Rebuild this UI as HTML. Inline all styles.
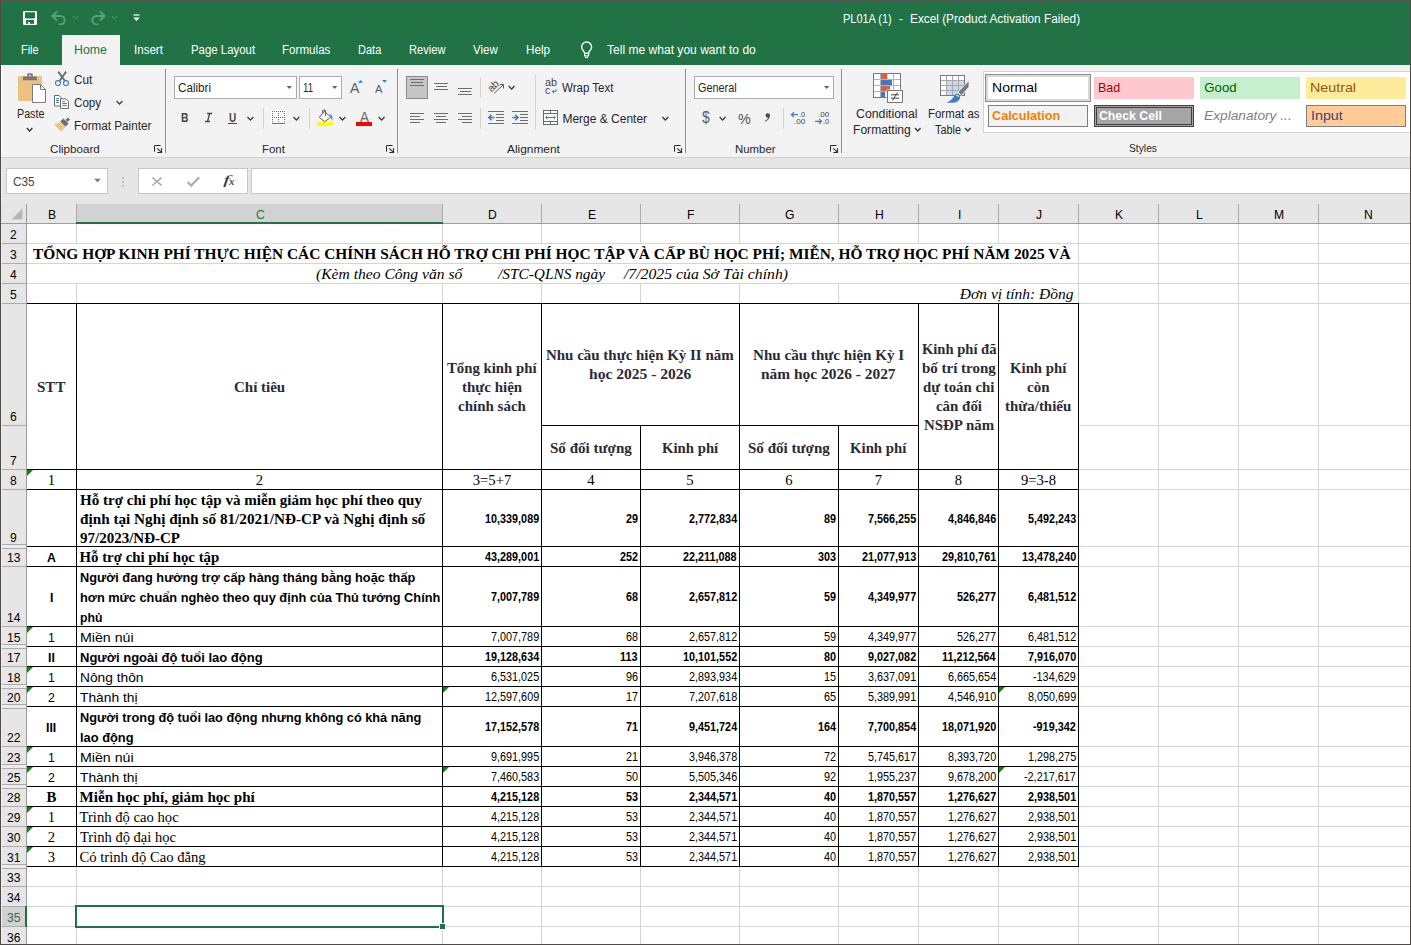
<!DOCTYPE html>
<html><head><meta charset="utf-8"><title>PL01A (1) - Excel</title>
<style>
html,body{margin:0;padding:0}
body{width:1411px;height:945px;overflow:hidden;position:relative;background:#fff;font-family:"Liberation Sans",sans-serif}
div,span,svg{position:absolute;display:block}
span{white-space:pre;transform-origin:0 0}
</style></head>
<body>
<div style="left:0px;top:0px;width:1411px;height:65px;background:#217346;"></div>
<div style="left:0px;top:65px;width:1411px;height:92px;background:#f3f3f3;"></div>
<div style="left:0px;top:157px;width:1411px;height:47px;background:#e6e6e6;"></div>
<div style="left:0px;top:157px;width:1411px;height:1px;background:#d2d2d2;"></div>
<div style="left:62px;top:35px;width:58px;height:30px;background:#f3f3f3;"></div>
<span style="left:842.50px;top:13px;font-size:12px;line-height:12px;color:#fff;transform:scaleX(0.9124);">PL01A (1)</span>
<span style="left:899.10px;top:13px;font-size:12px;line-height:12px;color:#fff;">-</span>
<span style="left:909.60px;top:13px;font-size:12px;line-height:12px;color:#fff;transform:scaleX(0.9847);">Excel (Product Activation Failed)</span>
<span style="left:21.30px;top:44px;font-size:12px;line-height:12px;color:#fff;transform:scaleX(0.9047);">File</span>
<span style="left:74.30px;top:44px;font-size:12px;line-height:12px;color:#217346;transform:scaleX(1.0276);">Home</span>
<span style="left:134.10px;top:44px;font-size:12px;line-height:12px;color:#fff;transform:scaleX(0.9628);">Insert</span>
<span style="left:190.50px;top:44px;font-size:12px;line-height:12px;color:#fff;transform:scaleX(0.9512);">Page Layout</span>
<span style="left:282.40px;top:44px;font-size:12px;line-height:12px;color:#fff;transform:scaleX(0.9677);">Formulas</span>
<span style="left:358.00px;top:44px;font-size:12px;line-height:12px;color:#fff;transform:scaleX(0.9188);">Data</span>
<span style="left:409.30px;top:44px;font-size:12px;line-height:12px;color:#fff;transform:scaleX(0.9274);">Review</span>
<span style="left:473.00px;top:44px;font-size:12px;line-height:12px;color:#fff;transform:scaleX(0.9575);">View</span>
<span style="left:525.50px;top:44px;font-size:12px;line-height:12px;color:#fff;transform:scaleX(0.9762);">Help</span>
<span style="left:606.90px;top:44px;font-size:12px;line-height:12px;color:#fff;transform:scaleX(1.0049);">Tell me what you want to do</span>
<svg style="left:23px;top:11px" width="14" height="14" viewBox="0 0 14 14"><rect x="0" y="0" width="14" height="14" rx="1" fill="#fff"/><path d="M2 1.2h10v5l-1 1.3h-8l-1-1.3z" fill="#217346"/><rect x="3" y="9" width="8" height="3.8" fill="#217346"/><rect x="5.1" y="11" width="1.8" height="1.8" fill="#fff"/></svg>
<svg style="left:51px;top:10px" width="16" height="15" viewBox="0 0 16 15"><path d="M6 1.5L1.5 6L6 10.5 M2 6H9.5a4.2 4.2 0 0 1 0 8.4H7.5" fill="none" stroke="#5f9f7c" stroke-width="1.9"/></svg>
<svg style="left:72px;top:15px" width="7" height="5" viewBox="0 0 7 5"><path d="M0.5 0.8L3.5 3.8L6.5 0.8" fill="none" stroke="#5f9f7c" stroke-width="1"/></svg>
<svg style="left:90px;top:10px" width="16" height="15" viewBox="0 0 16 15"><path d="M10 1.5L14.5 6L10 10.5 M14 6H6.5a4.2 4.2 0 0 0 0 8.4H8.5" fill="none" stroke="#5f9f7c" stroke-width="1.9"/></svg>
<svg style="left:111px;top:15px" width="7" height="5" viewBox="0 0 7 5"><path d="M0.5 0.8L3.5 3.8L6.5 0.8" fill="none" stroke="#5f9f7c" stroke-width="1"/></svg>
<svg style="left:133px;top:14px" width="7" height="8" viewBox="0 0 7 8"><path d="M0.5 1h6" stroke="#fff" stroke-width="1.2"/><path d="M0.3 3.5h6.4L3.5 7z" fill="#fff"/></svg>
<svg style="left:578px;top:40px" width="18" height="20" viewBox="0 0 18 20"><path d="M6.6 13.3c-0.2-2.6-3-3.3-3-6.3a5 5 0 0 1 10 0c0 3-2.8 3.7-3 6.3z" fill="none" stroke="#fff" stroke-width="1.35"/><rect x="6.6" y="13.3" width="4" height="2.6" fill="none" stroke="#fff" stroke-width="1.2"/><path d="M7.1 17.5h3" stroke="#fff" stroke-width="1.2"/></svg>
<div style="left:165px;top:69px;width:1px;height:84px;background:#8e8e8e;"></div>
<div style="left:397px;top:69px;width:1px;height:84px;background:#8e8e8e;"></div>
<div style="left:685px;top:69px;width:1px;height:84px;background:#8e8e8e;"></div>
<div style="left:841px;top:69px;width:1px;height:84px;background:#8e8e8e;"></div>
<span style="left:16.60px;top:108px;font-size:12px;line-height:12px;color:#262626;transform:scaleX(0.8929);">Paste</span>
<span style="left:73.50px;top:74px;font-size:12px;line-height:12px;color:#262626;transform:scaleX(0.9793);">Cut</span>
<span style="left:73.50px;top:97px;font-size:12px;line-height:12px;color:#262626;transform:scaleX(0.9673);">Copy</span>
<span style="left:73.50px;top:120px;font-size:12px;line-height:12px;color:#262626;transform:scaleX(0.9741);">Format Painter</span>
<span style="left:49.60px;top:144px;font-size:10.8px;line-height:10.8px;color:#262626;transform:scaleX(1.0775);">Clipboard</span>
<div style="left:174px;top:76px;width:123px;height:23px;background:#fff;box-sizing:border-box;border:1px solid #ababab;"></div>
<span style="left:177.80px;top:82px;font-size:12px;line-height:12px;color:#262626;transform:scaleX(0.9701);">Calibri</span>
<div style="left:299px;top:76px;width:43px;height:23px;background:#fff;box-sizing:border-box;border:1px solid #ababab;"></div>
<span style="left:302.90px;top:82px;font-size:12px;line-height:12px;color:#262626;transform:scaleX(0.8020);">11</span>
<span style="left:350.20px;top:81px;font-size:14px;line-height:14px;color:#5a5a5a;transform:scaleX(1.0060);">A</span>
<span style="left:375.30px;top:84px;font-size:11px;line-height:11px;color:#5a5a5a;transform:scaleX(1.0213);">A</span>
<span style="left:180.80px;top:112px;font-size:12.6px;line-height:12.6px;color:#444;font-weight:bold;transform:scaleX(0.8123);">B</span>
<span style="left:229.00px;top:112px;font-size:12.3px;line-height:12.3px;color:#444;font-weight:bold;transform:scaleX(0.8098);">U</span>
<div style="left:228px;top:123px;width:9px;height:1px;background:#444;"></div>
<div style="left:263px;top:108px;width:1px;height:21px;background:#d2d2d2;"></div>
<div style="left:271px;top:110px;width:15px;height:15px;background:#fff;"></div>
<div style="left:272px;top:123px;width:13px;height:1px;background:#6a6a6a;"></div>
<div style="left:309px;top:108px;width:1px;height:21px;background:#d2d2d2;"></div>
<div style="left:317px;top:122px;width:16px;height:4px;background:#ffff00;"></div>
<span style="left:359.70px;top:110px;font-size:14px;line-height:14px;color:#666;transform:scaleX(0.9632);">A</span>
<div style="left:356px;top:122px;width:16px;height:4px;background:#ff0000;"></div>
<span style="left:261.80px;top:144px;font-size:10.8px;line-height:10.8px;color:#262626;transform:scaleX(1.0597);">Font</span>
<div style="left:406px;top:76px;width:22px;height:23px;background:#c6c6c6;box-sizing:border-box;border:1px solid #8a8a8a;"></div>
<div style="left:410px;top:79px;width:14px;height:1px;background:#6e6e6e;"></div>
<div style="left:411px;top:82px;width:12px;height:1px;background:#6e6e6e;"></div>
<div style="left:410px;top:85px;width:14px;height:1px;background:#6e6e6e;"></div>
<div style="left:434px;top:83px;width:14px;height:1px;background:#6e6e6e;"></div>
<div style="left:436px;top:86px;width:11px;height:1px;background:#6e6e6e;"></div>
<div style="left:434px;top:89px;width:14px;height:1px;background:#6e6e6e;"></div>
<div style="left:458px;top:88px;width:14px;height:1px;background:#6e6e6e;"></div>
<div style="left:460px;top:91px;width:11px;height:1px;background:#6e6e6e;"></div>
<div style="left:458px;top:94px;width:14px;height:1px;background:#6e6e6e;"></div>
<div style="left:480px;top:77px;width:1px;height:21px;background:#d2d2d2;"></div>
<div style="left:535px;top:75px;width:1px;height:55px;background:#d2d2d2;"></div>
<div style="left:410px;top:113px;width:14px;height:1px;background:#6e6e6e;"></div>
<div style="left:410px;top:116px;width:10px;height:1px;background:#6e6e6e;"></div>
<div style="left:410px;top:119px;width:14px;height:1px;background:#6e6e6e;"></div>
<div style="left:410px;top:122px;width:10px;height:1px;background:#6e6e6e;"></div>
<div style="left:434px;top:113px;width:14px;height:1px;background:#6e6e6e;"></div>
<div style="left:436px;top:116px;width:10px;height:1px;background:#6e6e6e;"></div>
<div style="left:434px;top:119px;width:14px;height:1px;background:#6e6e6e;"></div>
<div style="left:436px;top:122px;width:10px;height:1px;background:#6e6e6e;"></div>
<div style="left:458px;top:113px;width:14px;height:1px;background:#6e6e6e;"></div>
<div style="left:462px;top:116px;width:10px;height:1px;background:#6e6e6e;"></div>
<div style="left:458px;top:119px;width:14px;height:1px;background:#6e6e6e;"></div>
<div style="left:462px;top:122px;width:10px;height:1px;background:#6e6e6e;"></div>
<div style="left:480px;top:108px;width:1px;height:21px;background:#d2d2d2;"></div>
<div style="left:488px;top:111px;width:16px;height:1px;background:#6e6e6e;"></div>
<div style="left:496px;top:114px;width:8px;height:1px;background:#6e6e6e;"></div>
<div style="left:496px;top:117px;width:8px;height:1px;background:#6e6e6e;"></div>
<div style="left:496px;top:120px;width:8px;height:1px;background:#6e6e6e;"></div>
<div style="left:488px;top:123px;width:16px;height:1px;background:#6e6e6e;"></div>
<div style="left:512px;top:111px;width:16px;height:1px;background:#6e6e6e;"></div>
<div style="left:520px;top:114px;width:8px;height:1px;background:#6e6e6e;"></div>
<div style="left:520px;top:117px;width:8px;height:1px;background:#6e6e6e;"></div>
<div style="left:520px;top:120px;width:8px;height:1px;background:#6e6e6e;"></div>
<div style="left:512px;top:123px;width:16px;height:1px;background:#6e6e6e;"></div>
<span style="left:544.80px;top:77px;font-size:10.5px;line-height:10.5px;color:#444;transform:scaleX(1.0267);">ab</span>
<span style="left:545.00px;top:85px;font-size:10.5px;line-height:10.5px;color:#444;transform:scaleX(0.9905);">c</span>
<span style="left:562.40px;top:82px;font-size:12px;line-height:12px;color:#262626;transform:scaleX(0.9612);">Wrap Text</span>
<span style="left:562.40px;top:113px;font-size:12px;line-height:12px;color:#262626;">Merge &amp; Center</span>
<span style="left:507.00px;top:144px;font-size:10.8px;line-height:10.8px;color:#262626;transform:scaleX(1.0996);">Alignment</span>
<div style="left:694px;top:76px;width:140px;height:23px;background:#fff;box-sizing:border-box;border:1px solid #ababab;"></div>
<span style="left:697.80px;top:82px;font-size:12px;line-height:12px;color:#262626;transform:scaleX(0.9039);">General</span>
<span style="left:701.50px;top:110px;font-size:16px;line-height:16px;color:#5a5a5a;transform:scaleX(0.8758);">$</span>
<span style="left:738.30px;top:111px;font-size:15.5px;line-height:15.5px;color:#555;transform:scaleX(0.9277);">%</span>
<div style="left:783px;top:108px;width:1px;height:21px;background:#d2d2d2;"></div>
<span style="left:798.90px;top:111px;font-size:8px;line-height:8px;color:#444;transform:scaleX(0.9293);">.0</span>
<span style="left:793.90px;top:118px;font-size:8px;line-height:8px;color:#444;transform:scaleX(1.0067);">.00</span>
<span style="left:817.90px;top:111px;font-size:8px;line-height:8px;color:#444;transform:scaleX(1.0067);">.00</span>
<span style="left:822.70px;top:118px;font-size:8px;line-height:8px;color:#444;transform:scaleX(0.9293);">.0</span>
<span style="left:735.40px;top:144px;font-size:10.8px;line-height:10.8px;color:#262626;transform:scaleX(1.0571);">Number</span>
<span style="left:856.40px;top:108px;font-size:12px;line-height:12px;color:#262626;transform:scaleX(1.0242);">Conditional</span>
<span style="left:852.50px;top:124px;font-size:12px;line-height:12px;color:#262626;transform:scaleX(1.0077);">Formatting</span>
<span style="left:927.50px;top:108px;font-size:12px;line-height:12px;color:#262626;transform:scaleX(0.9534);">Format as</span>
<span style="left:935.00px;top:124px;font-size:12px;line-height:12px;color:#262626;transform:scaleX(0.9063);">Table</span>
<div style="left:983px;top:71px;width:440px;height:62px;background:#fff;box-sizing:border-box;border:1px solid #d4d4d4;"></div>
<div style="left:985px;top:74px;width:106px;height:28px;background:#fff;box-sizing:border-box;border:1px solid #8e8e8e;box-shadow:inset 0 0 0 2px #d8d8d4;"></div>
<span style="left:991.90px;top:81px;font-size:13.2px;line-height:13.2px;color:#000;transform:scaleX(1.0635);">Normal</span>
<div style="left:1094px;top:77px;width:100px;height:22px;background:#ffc7ce;"></div>
<span style="left:1098.20px;top:81px;font-size:13.2px;line-height:13.2px;color:#9c0006;transform:scaleX(0.9417);">Bad</span>
<div style="left:1200px;top:77px;width:100px;height:22px;background:#c6efce;"></div>
<span style="left:1204.30px;top:81px;font-size:13.2px;line-height:13.2px;color:#006100;">Good</span>
<div style="left:1306px;top:77px;width:100px;height:22px;background:#ffeb9c;"></div>
<span style="left:1310.30px;top:81px;font-size:13.2px;line-height:13.2px;color:#9c5700;transform:scaleX(1.0820);">Neutral</span>
<div style="left:988px;top:105px;width:100px;height:22px;background:#f2f2f2;box-sizing:border-box;border:1px solid #7f7f7f;"></div>
<span style="left:992.10px;top:109px;font-size:13.2px;line-height:13.2px;color:#fa7d00;font-weight:bold;transform:scaleX(0.9609);">Calculation</span>
<div style="left:1094px;top:105px;width:100px;height:22px;background:#a5a5a5;box-sizing:border-box;border:3px double #3f3f3f;"></div>
<span style="left:1098.50px;top:109px;font-size:13.2px;line-height:13.2px;color:#fff;font-weight:bold;transform:scaleX(0.9312);">Check Cell</span>
<span style="left:1204.30px;top:109px;font-size:13.2px;line-height:13.2px;color:#7f7f7f;font-style:italic;transform:scaleX(1.0404);">Explanatory ...</span>
<div style="left:1306px;top:105px;width:100px;height:22px;background:#ffcc99;box-sizing:border-box;border:1px solid #7f7f7f;"></div>
<span style="left:1310.70px;top:109px;font-size:13.2px;line-height:13.2px;color:#3f3f76;transform:scaleX(1.0837);">Input</span>
<span style="left:1128.60px;top:143px;font-size:10.8px;line-height:10.8px;color:#262626;transform:scaleX(0.9522);">Styles</span>
<div style="left:6px;top:168px;width:102px;height:26px;background:#fff;box-sizing:border-box;border:1px solid #c6c6c6;"></div>
<span style="left:13.00px;top:176px;font-size:12px;line-height:12px;color:#444;transform:scaleX(0.9857);">C35</span>
<div style="left:122px;top:177px;width:2px;height:2px;background:#c0c0c0;"></div>
<div style="left:122px;top:181px;width:2px;height:2px;background:#c0c0c0;"></div>
<div style="left:122px;top:185px;width:2px;height:2px;background:#c0c0c0;"></div>
<div style="left:138px;top:168px;width:110px;height:26px;background:#fff;box-sizing:border-box;border:1px solid #c6c6c6;"></div>
<span style="left:223.40px;top:174px;font-size:12.7px;line-height:12.7px;color:#333;font-family:'Liberation Serif',serif;font-style:italic;transform:scaleX(1.9823);">f</span>
<span style="left:229.40px;top:176px;font-size:11px;line-height:11px;color:#4a4a4a;font-family:'Liberation Serif',serif;font-weight:bold;font-style:italic;transform:scaleX(0.9818);">x</span>
<div style="left:251px;top:168px;width:1170px;height:26px;background:#fff;box-sizing:border-box;border:1px solid #c6c6c6;"></div>
<div style="left:0px;top:204px;width:1411px;height:741px;background:#fff;"></div>
<div style="left:0px;top:204px;width:1411px;height:20px;background:#e6e6e6;"></div>
<div style="left:0px;top:204px;width:27px;height:741px;background:#e6e6e6;"></div>
<div style="left:77px;top:204px;width:365px;height:20px;background:#d2d2d2;"></div>
<div style="left:1px;top:907px;width:25px;height:19px;background:#d2d2d2;"></div>
<div style="left:76px;top:224px;width:1px;height:721px;background:#d4d4d4;"></div>
<div style="left:442px;top:224px;width:1px;height:721px;background:#d4d4d4;"></div>
<div style="left:541px;top:224px;width:1px;height:721px;background:#d4d4d4;"></div>
<div style="left:640px;top:224px;width:1px;height:721px;background:#d4d4d4;"></div>
<div style="left:739px;top:224px;width:1px;height:721px;background:#d4d4d4;"></div>
<div style="left:838px;top:224px;width:1px;height:721px;background:#d4d4d4;"></div>
<div style="left:918px;top:224px;width:1px;height:721px;background:#d4d4d4;"></div>
<div style="left:998px;top:224px;width:1px;height:721px;background:#d4d4d4;"></div>
<div style="left:1078px;top:224px;width:1px;height:721px;background:#d4d4d4;"></div>
<div style="left:1158px;top:224px;width:1px;height:721px;background:#d4d4d4;"></div>
<div style="left:1238px;top:224px;width:1px;height:721px;background:#d4d4d4;"></div>
<div style="left:1318px;top:224px;width:1px;height:721px;background:#d4d4d4;"></div>
<div style="left:27px;top:243px;width:1384px;height:1px;background:#d4d4d4;"></div>
<div style="left:27px;top:263px;width:1384px;height:1px;background:#d4d4d4;"></div>
<div style="left:27px;top:283px;width:1384px;height:1px;background:#d4d4d4;"></div>
<div style="left:27px;top:303px;width:1384px;height:1px;background:#d4d4d4;"></div>
<div style="left:27px;top:425px;width:1384px;height:1px;background:#d4d4d4;"></div>
<div style="left:27px;top:469px;width:1384px;height:1px;background:#d4d4d4;"></div>
<div style="left:27px;top:489px;width:1384px;height:1px;background:#d4d4d4;"></div>
<div style="left:27px;top:546px;width:1384px;height:1px;background:#d4d4d4;"></div>
<div style="left:27px;top:566px;width:1384px;height:1px;background:#d4d4d4;"></div>
<div style="left:27px;top:626px;width:1384px;height:1px;background:#d4d4d4;"></div>
<div style="left:27px;top:646px;width:1384px;height:1px;background:#d4d4d4;"></div>
<div style="left:27px;top:666px;width:1384px;height:1px;background:#d4d4d4;"></div>
<div style="left:27px;top:686px;width:1384px;height:1px;background:#d4d4d4;"></div>
<div style="left:27px;top:706px;width:1384px;height:1px;background:#d4d4d4;"></div>
<div style="left:27px;top:746px;width:1384px;height:1px;background:#d4d4d4;"></div>
<div style="left:27px;top:766px;width:1384px;height:1px;background:#d4d4d4;"></div>
<div style="left:27px;top:786px;width:1384px;height:1px;background:#d4d4d4;"></div>
<div style="left:27px;top:806px;width:1384px;height:1px;background:#d4d4d4;"></div>
<div style="left:27px;top:826px;width:1384px;height:1px;background:#d4d4d4;"></div>
<div style="left:27px;top:846px;width:1384px;height:1px;background:#d4d4d4;"></div>
<div style="left:27px;top:866px;width:1384px;height:1px;background:#d4d4d4;"></div>
<div style="left:27px;top:886px;width:1384px;height:1px;background:#d4d4d4;"></div>
<div style="left:27px;top:906px;width:1384px;height:1px;background:#d4d4d4;"></div>
<div style="left:27px;top:926px;width:1384px;height:1px;background:#d4d4d4;"></div>
<div style="left:27px;top:946px;width:1384px;height:1px;background:#d4d4d4;"></div>
<div style="left:27px;top:244px;width:1051px;height:19px;background:#fff;"></div>
<div style="left:27px;top:264px;width:1051px;height:19px;background:#fff;"></div>
<div style="left:839px;top:284px;width:239px;height:19px;background:#fff;"></div>
<div style="left:76px;top:204px;width:1px;height:19px;background:#ababab;"></div>
<div style="left:442px;top:204px;width:1px;height:19px;background:#ababab;"></div>
<div style="left:541px;top:204px;width:1px;height:19px;background:#ababab;"></div>
<div style="left:640px;top:204px;width:1px;height:19px;background:#ababab;"></div>
<div style="left:739px;top:204px;width:1px;height:19px;background:#ababab;"></div>
<div style="left:838px;top:204px;width:1px;height:19px;background:#ababab;"></div>
<div style="left:918px;top:204px;width:1px;height:19px;background:#ababab;"></div>
<div style="left:998px;top:204px;width:1px;height:19px;background:#ababab;"></div>
<div style="left:1078px;top:204px;width:1px;height:19px;background:#ababab;"></div>
<div style="left:1158px;top:204px;width:1px;height:19px;background:#ababab;"></div>
<div style="left:1238px;top:204px;width:1px;height:19px;background:#ababab;"></div>
<div style="left:1318px;top:204px;width:1px;height:19px;background:#ababab;"></div>
<div style="left:0px;top:223px;width:1411px;height:1px;background:#9b9b9b;"></div>
<div style="left:26px;top:204px;width:1px;height:741px;background:#9b9b9b;"></div>
<div style="left:0px;top:243px;width:26px;height:1px;background:#ababab;"></div>
<div style="left:0px;top:263px;width:26px;height:1px;background:#ababab;"></div>
<div style="left:0px;top:283px;width:26px;height:1px;background:#ababab;"></div>
<div style="left:0px;top:303px;width:26px;height:1px;background:#ababab;"></div>
<div style="left:0px;top:425px;width:26px;height:1px;background:#ababab;"></div>
<div style="left:0px;top:469px;width:26px;height:1px;background:#ababab;"></div>
<div style="left:0px;top:489px;width:26px;height:1px;background:#ababab;"></div>
<div style="left:0px;top:546px;width:26px;height:1px;background:#ababab;"></div>
<div style="left:0px;top:566px;width:26px;height:1px;background:#ababab;"></div>
<div style="left:0px;top:626px;width:26px;height:1px;background:#ababab;"></div>
<div style="left:0px;top:646px;width:26px;height:1px;background:#ababab;"></div>
<div style="left:0px;top:666px;width:26px;height:1px;background:#ababab;"></div>
<div style="left:0px;top:686px;width:26px;height:1px;background:#ababab;"></div>
<div style="left:0px;top:706px;width:26px;height:1px;background:#ababab;"></div>
<div style="left:0px;top:746px;width:26px;height:1px;background:#ababab;"></div>
<div style="left:0px;top:766px;width:26px;height:1px;background:#ababab;"></div>
<div style="left:0px;top:786px;width:26px;height:1px;background:#ababab;"></div>
<div style="left:0px;top:806px;width:26px;height:1px;background:#ababab;"></div>
<div style="left:0px;top:826px;width:26px;height:1px;background:#ababab;"></div>
<div style="left:0px;top:846px;width:26px;height:1px;background:#ababab;"></div>
<div style="left:0px;top:866px;width:26px;height:1px;background:#ababab;"></div>
<div style="left:0px;top:886px;width:26px;height:1px;background:#ababab;"></div>
<div style="left:0px;top:906px;width:26px;height:1px;background:#ababab;"></div>
<div style="left:0px;top:926px;width:26px;height:1px;background:#ababab;"></div>
<div style="left:0px;top:946px;width:26px;height:1px;background:#ababab;"></div>
<div style="left:0px;top:545px;width:26px;height:3px;background:#ececec;"></div>
<div style="left:0px;top:544px;width:26px;height:1px;background:#ababab;"></div>
<div style="left:0px;top:548px;width:26px;height:1px;background:#ababab;"></div>
<div style="left:0px;top:645px;width:26px;height:3px;background:#ececec;"></div>
<div style="left:0px;top:644px;width:26px;height:1px;background:#ababab;"></div>
<div style="left:0px;top:648px;width:26px;height:1px;background:#ababab;"></div>
<div style="left:0px;top:685px;width:26px;height:3px;background:#ececec;"></div>
<div style="left:0px;top:684px;width:26px;height:1px;background:#ababab;"></div>
<div style="left:0px;top:688px;width:26px;height:1px;background:#ababab;"></div>
<div style="left:0px;top:705px;width:26px;height:3px;background:#ececec;"></div>
<div style="left:0px;top:704px;width:26px;height:1px;background:#ababab;"></div>
<div style="left:0px;top:708px;width:26px;height:1px;background:#ababab;"></div>
<div style="left:0px;top:765px;width:26px;height:3px;background:#ececec;"></div>
<div style="left:0px;top:764px;width:26px;height:1px;background:#ababab;"></div>
<div style="left:0px;top:768px;width:26px;height:1px;background:#ababab;"></div>
<div style="left:0px;top:785px;width:26px;height:3px;background:#ececec;"></div>
<div style="left:0px;top:784px;width:26px;height:1px;background:#ababab;"></div>
<div style="left:0px;top:788px;width:26px;height:1px;background:#ababab;"></div>
<div style="left:0px;top:865px;width:26px;height:3px;background:#ececec;"></div>
<div style="left:0px;top:864px;width:26px;height:1px;background:#ababab;"></div>
<div style="left:0px;top:868px;width:26px;height:1px;background:#ababab;"></div>
<div style="left:76px;top:222px;width:367px;height:2px;background:#217346;"></div>
<div style="left:25px;top:906px;width:2px;height:21px;background:#217346;"></div>
<span style="left:48.25px;top:208px;font-size:13.2px;line-height:13.2px;color:#000;transform:scaleX(0.9200);">B</span>
<span style="left:255.92px;top:208px;font-size:13.2px;line-height:13.2px;color:#217346;transform:scaleX(0.9200);">C</span>
<span style="left:488.42px;top:208px;font-size:13.2px;line-height:13.2px;color:#000;transform:scaleX(0.9200);">D</span>
<span style="left:587.75px;top:208px;font-size:13.2px;line-height:13.2px;color:#000;transform:scaleX(0.9200);">E</span>
<span style="left:687.09px;top:208px;font-size:13.2px;line-height:13.2px;color:#000;transform:scaleX(0.9200);">F</span>
<span style="left:785.08px;top:208px;font-size:13.2px;line-height:13.2px;color:#000;transform:scaleX(0.9200);">G</span>
<span style="left:874.92px;top:208px;font-size:13.2px;line-height:13.2px;color:#000;transform:scaleX(0.9200);">H</span>
<span style="left:957.61px;top:208px;font-size:13.2px;line-height:13.2px;color:#000;transform:scaleX(0.9200);">I</span>
<span style="left:1036.27px;top:208px;font-size:13.2px;line-height:13.2px;color:#000;transform:scaleX(0.9200);">J</span>
<span style="left:1115.25px;top:208px;font-size:13.2px;line-height:13.2px;color:#000;transform:scaleX(0.9200);">K</span>
<span style="left:1195.92px;top:208px;font-size:13.2px;line-height:13.2px;color:#000;transform:scaleX(0.9200);">L</span>
<span style="left:1274.24px;top:208px;font-size:13.2px;line-height:13.2px;color:#000;transform:scaleX(0.9200);">M</span>
<span style="left:1364.42px;top:208px;font-size:13.2px;line-height:13.2px;color:#000;transform:scaleX(0.9200);">N</span>
<span style="left:10.22px;top:228px;font-size:13.2px;line-height:13.2px;color:#000;transform:scaleX(0.9200);">2</span>
<span style="left:10.22px;top:248px;font-size:13.2px;line-height:13.2px;color:#000;transform:scaleX(0.9200);">3</span>
<span style="left:10.22px;top:268px;font-size:13.2px;line-height:13.2px;color:#000;transform:scaleX(0.9200);">4</span>
<span style="left:10.22px;top:288px;font-size:13.2px;line-height:13.2px;color:#000;transform:scaleX(0.9200);">5</span>
<span style="left:10.22px;top:410px;font-size:13.2px;line-height:13.2px;color:#000;transform:scaleX(0.9200);">6</span>
<span style="left:10.22px;top:454px;font-size:13.2px;line-height:13.2px;color:#000;transform:scaleX(0.9200);">7</span>
<span style="left:10.22px;top:474px;font-size:13.2px;line-height:13.2px;color:#000;transform:scaleX(0.9200);">8</span>
<span style="left:10.22px;top:531px;font-size:13.2px;line-height:13.2px;color:#000;transform:scaleX(0.9200);">9</span>
<span style="left:6.85px;top:551px;font-size:13.2px;line-height:13.2px;color:#000;transform:scaleX(0.9200);">13</span>
<span style="left:6.85px;top:611px;font-size:13.2px;line-height:13.2px;color:#000;transform:scaleX(0.9200);">14</span>
<span style="left:6.85px;top:631px;font-size:13.2px;line-height:13.2px;color:#000;transform:scaleX(0.9200);">15</span>
<span style="left:6.85px;top:651px;font-size:13.2px;line-height:13.2px;color:#000;transform:scaleX(0.9200);">17</span>
<span style="left:6.85px;top:671px;font-size:13.2px;line-height:13.2px;color:#000;transform:scaleX(0.9200);">18</span>
<span style="left:6.85px;top:691px;font-size:13.2px;line-height:13.2px;color:#000;transform:scaleX(0.9200);">20</span>
<span style="left:6.85px;top:731px;font-size:13.2px;line-height:13.2px;color:#000;transform:scaleX(0.9200);">22</span>
<span style="left:6.85px;top:751px;font-size:13.2px;line-height:13.2px;color:#000;transform:scaleX(0.9200);">23</span>
<span style="left:6.85px;top:771px;font-size:13.2px;line-height:13.2px;color:#000;transform:scaleX(0.9200);">25</span>
<span style="left:6.85px;top:791px;font-size:13.2px;line-height:13.2px;color:#000;transform:scaleX(0.9200);">28</span>
<span style="left:6.85px;top:811px;font-size:13.2px;line-height:13.2px;color:#000;transform:scaleX(0.9200);">29</span>
<span style="left:6.85px;top:831px;font-size:13.2px;line-height:13.2px;color:#000;transform:scaleX(0.9200);">30</span>
<span style="left:6.85px;top:851px;font-size:13.2px;line-height:13.2px;color:#000;transform:scaleX(0.9200);">31</span>
<span style="left:6.85px;top:871px;font-size:13.2px;line-height:13.2px;color:#000;transform:scaleX(0.9200);">33</span>
<span style="left:6.85px;top:891px;font-size:13.2px;line-height:13.2px;color:#000;transform:scaleX(0.9200);">34</span>
<span style="left:6.85px;top:911px;font-size:13.2px;line-height:13.2px;color:#217346;transform:scaleX(0.9200);">35</span>
<span style="left:6.85px;top:931px;font-size:13.2px;line-height:13.2px;color:#000;transform:scaleX(0.9200);">36</span>
<div style="left:27px;top:303px;width:1052px;height:1px;background:#000;"></div>
<div style="left:27px;top:469px;width:1052px;height:1px;background:#000;"></div>
<div style="left:27px;top:489px;width:1052px;height:1px;background:#000;"></div>
<div style="left:27px;top:546px;width:1052px;height:1px;background:#000;"></div>
<div style="left:27px;top:566px;width:1052px;height:1px;background:#000;"></div>
<div style="left:27px;top:626px;width:1052px;height:1px;background:#000;"></div>
<div style="left:27px;top:646px;width:1052px;height:1px;background:#000;"></div>
<div style="left:27px;top:666px;width:1052px;height:1px;background:#000;"></div>
<div style="left:27px;top:686px;width:1052px;height:1px;background:#000;"></div>
<div style="left:27px;top:706px;width:1052px;height:1px;background:#000;"></div>
<div style="left:27px;top:746px;width:1052px;height:1px;background:#000;"></div>
<div style="left:27px;top:766px;width:1052px;height:1px;background:#000;"></div>
<div style="left:27px;top:786px;width:1052px;height:1px;background:#000;"></div>
<div style="left:27px;top:806px;width:1052px;height:1px;background:#000;"></div>
<div style="left:27px;top:826px;width:1052px;height:1px;background:#000;"></div>
<div style="left:27px;top:846px;width:1052px;height:1px;background:#000;"></div>
<div style="left:27px;top:866px;width:1052px;height:1px;background:#000;"></div>
<div style="left:541px;top:425px;width:378px;height:1px;background:#000;"></div>
<div style="left:76px;top:303px;width:1px;height:564px;background:#000;"></div>
<div style="left:442px;top:303px;width:1px;height:564px;background:#000;"></div>
<div style="left:541px;top:303px;width:1px;height:564px;background:#000;"></div>
<div style="left:739px;top:303px;width:1px;height:564px;background:#000;"></div>
<div style="left:918px;top:303px;width:1px;height:564px;background:#000;"></div>
<div style="left:998px;top:303px;width:1px;height:564px;background:#000;"></div>
<div style="left:1078px;top:303px;width:1px;height:564px;background:#000;"></div>
<div style="left:640px;top:425px;width:1px;height:442px;background:#000;"></div>
<div style="left:838px;top:425px;width:1px;height:442px;background:#000;"></div>
<div style="left:75px;top:905px;width:369px;height:23px;box-sizing:border-box;border:2px solid #217346;"></div>
<div style="left:439px;top:923px;width:7px;height:7px;background:#217346;box-sizing:border-box;border:1px solid #fff;"></div>
<div style="left:27px;top:304px;width:49px;height:165px;background:#fff;"></div>
<div style="left:77px;top:304px;width:365px;height:165px;background:#fff;"></div>
<div style="left:443px;top:304px;width:98px;height:165px;background:#fff;"></div>
<div style="left:919px;top:304px;width:79px;height:165px;background:#fff;"></div>
<div style="left:999px;top:304px;width:79px;height:165px;background:#fff;"></div>
<div style="left:542px;top:304px;width:197px;height:121px;background:#fff;"></div>
<div style="left:740px;top:304px;width:178px;height:121px;background:#fff;"></div>
<span style="left:33.10px;top:246px;font-size:15.3px;line-height:15.3px;color:#000;font-family:'Liberation Serif',serif;font-weight:bold;transform:scaleX(1.0061);">TỔNG HỢP KINH PHÍ THỰC HIỆN CÁC CHÍNH SÁCH HỖ TRỢ CHI PHÍ HỌC TẬP VÀ CẤP BÙ HỌC PHÍ; MIỄN, HỖ TRỢ HỌC PHÍ NĂM 2025 VÀ</span>
<span style="left:316.00px;top:266px;font-size:15.5px;line-height:15.5px;color:#000;font-family:'Liberation Serif',serif;font-style:italic;transform:scaleX(1.0054);">(Kèm theo Công văn số</span>
<span style="left:497.70px;top:266px;font-size:15.5px;line-height:15.5px;color:#000;font-family:'Liberation Serif',serif;font-style:italic;transform:scaleX(0.9899);">/STC-QLNS ngày</span>
<span style="left:624.20px;top:266px;font-size:15.5px;line-height:15.5px;color:#000;font-family:'Liberation Serif',serif;font-style:italic;transform:scaleX(1.0158);">/7/2025 của Sở Tài chính)</span>
<span style="left:959.80px;top:286px;font-size:15.5px;line-height:15.5px;color:#000;font-family:'Liberation Serif',serif;font-style:italic;">Đơn vị tính: Đồng</span>
<span style="left:36.80px;top:380px;font-size:14.67px;line-height:14.67px;color:#2b2b38;font-family:'Liberation Serif',serif;font-weight:bold;transform:scaleX(1.0252);">STT</span>
<span style="left:233.90px;top:380px;font-size:14.67px;line-height:14.67px;color:#2b2b38;font-family:'Liberation Serif',serif;font-weight:bold;transform:scaleX(1.0220);">Chỉ tiêu</span>
<span style="left:447.05px;top:361px;font-size:14.67px;line-height:14.67px;color:#2b2b38;font-family:'Liberation Serif',serif;font-weight:bold;transform:scaleX(1.0077);">Tổng kinh phí</span>
<span style="left:461.70px;top:380px;font-size:14.67px;line-height:14.67px;color:#2b2b38;font-family:'Liberation Serif',serif;font-weight:bold;transform:scaleX(1.0222);">thực hiện</span>
<span style="left:457.85px;top:399px;font-size:14.67px;line-height:14.67px;color:#2b2b38;font-family:'Liberation Serif',serif;font-weight:bold;transform:scaleX(1.0227);">chính sách</span>
<span style="left:546.05px;top:348px;font-size:14.67px;line-height:14.67px;color:#2b2b38;font-family:'Liberation Serif',serif;font-weight:bold;transform:scaleX(1.0207);">Nhu cầu thực hiện Kỳ II năm</span>
<span style="left:588.70px;top:367px;font-size:14.67px;line-height:14.67px;color:#2b2b38;font-family:'Liberation Serif',serif;font-weight:bold;transform:scaleX(1.0613);">học 2025 - 2026</span>
<span style="left:752.90px;top:348px;font-size:14.67px;line-height:14.67px;color:#2b2b38;font-family:'Liberation Serif',serif;font-weight:bold;transform:scaleX(1.0297);">Nhu cầu thực hiện Kỳ I</span>
<span style="left:761.20px;top:367px;font-size:14.67px;line-height:14.67px;color:#2b2b38;font-family:'Liberation Serif',serif;font-weight:bold;transform:scaleX(1.0528);">năm học 2026 - 2027</span>
<span style="left:921.55px;top:342px;font-size:14.67px;line-height:14.67px;color:#2b2b38;font-family:'Liberation Serif',serif;font-weight:bold;transform:scaleX(0.9937);">Kinh phí đã</span>
<span style="left:921.90px;top:361px;font-size:14.67px;line-height:14.67px;color:#2b2b38;font-family:'Liberation Serif',serif;font-weight:bold;transform:scaleX(1.0221);">bố trí trong</span>
<span style="left:923.15px;top:380px;font-size:14.67px;line-height:14.67px;color:#2b2b38;font-family:'Liberation Serif',serif;font-weight:bold;transform:scaleX(1.0084);">dự toán chi</span>
<span style="left:935.80px;top:399px;font-size:14.67px;line-height:14.67px;color:#2b2b38;font-family:'Liberation Serif',serif;font-weight:bold;transform:scaleX(1.0176);">cân đối</span>
<span style="left:923.75px;top:418px;font-size:14.67px;line-height:14.67px;color:#2b2b38;font-family:'Liberation Serif',serif;font-weight:bold;transform:scaleX(1.0185);">NSĐP năm</span>
<span style="left:1010.20px;top:361px;font-size:14.67px;line-height:14.67px;color:#2b2b38;font-family:'Liberation Serif',serif;font-weight:bold;transform:scaleX(1.0102);">Kinh phí</span>
<span style="left:1027.15px;top:380px;font-size:14.67px;line-height:14.67px;color:#2b2b38;font-family:'Liberation Serif',serif;font-weight:bold;transform:scaleX(1.0235);">còn</span>
<span style="left:1005.25px;top:399px;font-size:14.67px;line-height:14.67px;color:#2b2b38;font-family:'Liberation Serif',serif;font-weight:bold;transform:scaleX(1.0200);">thừa/thiếu</span>
<span style="left:550.10px;top:441px;font-size:14.67px;line-height:14.67px;color:#2b2b38;font-family:'Liberation Serif',serif;font-weight:bold;transform:scaleX(1.0271);">Số đối tượng</span>
<span style="left:661.90px;top:441px;font-size:14.67px;line-height:14.67px;color:#2b2b38;font-family:'Liberation Serif',serif;font-weight:bold;transform:scaleX(1.0067);">Kinh phí</span>
<span style="left:748.30px;top:441px;font-size:14.67px;line-height:14.67px;color:#2b2b38;font-family:'Liberation Serif',serif;font-weight:bold;transform:scaleX(1.0271);">Số đối tượng</span>
<span style="left:850.10px;top:441px;font-size:14.67px;line-height:14.67px;color:#2b2b38;font-family:'Liberation Serif',serif;font-weight:bold;transform:scaleX(1.0102);">Kinh phí</span>
<span style="left:47.84px;top:473px;font-size:14.67px;line-height:14.67px;color:#000;font-family:'Liberation Serif',serif;">1</span>
<span style="left:255.84px;top:473px;font-size:14.67px;line-height:14.67px;color:#000;font-family:'Liberation Serif',serif;">2</span>
<span style="left:472.74px;top:473px;font-size:14.67px;line-height:14.67px;color:#000;font-family:'Liberation Serif',serif;">3=5+7</span>
<span style="left:587.34px;top:473px;font-size:14.67px;line-height:14.67px;color:#000;font-family:'Liberation Serif',serif;">4</span>
<span style="left:686.34px;top:473px;font-size:14.67px;line-height:14.67px;color:#000;font-family:'Liberation Serif',serif;">5</span>
<span style="left:785.34px;top:473px;font-size:14.67px;line-height:14.67px;color:#000;font-family:'Liberation Serif',serif;">6</span>
<span style="left:874.84px;top:473px;font-size:14.67px;line-height:14.67px;color:#000;font-family:'Liberation Serif',serif;">7</span>
<span style="left:954.84px;top:473px;font-size:14.67px;line-height:14.67px;color:#000;font-family:'Liberation Serif',serif;">8</span>
<span style="left:1020.93px;top:473px;font-size:14.67px;line-height:14.67px;color:#000;font-family:'Liberation Serif',serif;">9=3-8</span>
<span style="left:79.50px;top:493px;font-size:14.85px;line-height:14.85px;color:#000;font-family:'Liberation Serif',serif;font-weight:bold;transform:scaleX(1.0139);">Hỗ trợ chi phí học tập và miễn giảm học phí theo quy</span>
<span style="left:79.50px;top:512px;font-size:14.85px;line-height:14.85px;color:#000;font-family:'Liberation Serif',serif;font-weight:bold;transform:scaleX(1.0244);">định tại Nghị định số 81/2021/NĐ-CP và Nghị định số</span>
<span style="left:79.50px;top:531px;font-size:14.85px;line-height:14.85px;color:#000;font-family:'Liberation Serif',serif;font-weight:bold;transform:scaleX(1.0106);">97/2023/NĐ-CP</span>
<span style="left:79.50px;top:550px;font-size:14.85px;line-height:14.85px;color:#000;font-family:'Liberation Serif',serif;font-weight:bold;">Hỗ trợ chi phí học tập</span>
<span style="left:79.50px;top:571px;font-size:13.2px;line-height:13.2px;color:#000;font-weight:bold;transform:scaleX(0.9666);">Người đang hưởng trợ cấp hàng tháng bằng hoặc thấp</span>
<span style="left:79.50px;top:591px;font-size:13.2px;line-height:13.2px;color:#000;font-weight:bold;transform:scaleX(0.9688);">hơn mức chuẩn nghèo theo quy định của Thủ tướng Chính</span>
<span style="left:79.50px;top:611px;font-size:13.2px;line-height:13.2px;color:#000;font-weight:bold;transform:scaleX(0.9300);">phủ</span>
<span style="left:79.50px;top:631px;font-size:13.2px;line-height:13.2px;color:#000;transform:scaleX(1.0750);">Miền núi</span>
<span style="left:79.50px;top:651px;font-size:13.2px;line-height:13.2px;color:#000;font-weight:bold;transform:scaleX(0.9859);">Người ngoài độ tuổi lao động</span>
<span style="left:79.50px;top:671px;font-size:13.2px;line-height:13.2px;color:#000;transform:scaleX(1.0434);">Nông thôn</span>
<span style="left:79.50px;top:691px;font-size:13.2px;line-height:13.2px;color:#000;transform:scaleX(1.0455);">Thành thị</span>
<span style="left:79.50px;top:711px;font-size:13.2px;line-height:13.2px;color:#000;font-weight:bold;transform:scaleX(0.9666);">Người trong độ tuổi lao động nhưng không có khả năng</span>
<span style="left:79.50px;top:731px;font-size:13.2px;line-height:13.2px;color:#000;font-weight:bold;transform:scaleX(0.9754);">lao động</span>
<span style="left:79.50px;top:751px;font-size:13.2px;line-height:13.2px;color:#000;transform:scaleX(1.0750);">Miền núi</span>
<span style="left:79.50px;top:771px;font-size:13.2px;line-height:13.2px;color:#000;transform:scaleX(1.0455);">Thành thị</span>
<span style="left:79.50px;top:790px;font-size:15.1px;line-height:15.1px;color:#000;font-family:'Liberation Serif',serif;font-weight:bold;">Miễn học phí, giảm học phí</span>
<span style="left:79.50px;top:810px;font-size:14.67px;line-height:14.67px;color:#000;font-family:'Liberation Serif',serif;">Trình độ cao học</span>
<span style="left:79.50px;top:830px;font-size:14.67px;line-height:14.67px;color:#000;font-family:'Liberation Serif',serif;transform:scaleX(0.9921);">Trình độ đại học</span>
<span style="left:79.50px;top:850px;font-size:14.67px;line-height:14.67px;color:#000;font-family:'Liberation Serif',serif;">Có trình độ Cao đẳng</span>
<span style="left:47.07px;top:551px;font-size:13.2px;line-height:13.2px;color:#000;font-weight:bold;transform:scaleX(0.9300);">A</span>
<span style="left:49.79px;top:591px;font-size:13.2px;line-height:13.2px;color:#000;font-weight:bold;transform:scaleX(0.9300);">I</span>
<span style="left:48.09px;top:631px;font-size:13.2px;line-height:13.2px;color:#000;transform:scaleX(0.9300);">1</span>
<span style="left:48.09px;top:651px;font-size:13.2px;line-height:13.2px;color:#000;font-weight:bold;transform:scaleX(0.9300);">II</span>
<span style="left:48.09px;top:671px;font-size:13.2px;line-height:13.2px;color:#000;transform:scaleX(0.9300);">1</span>
<span style="left:48.09px;top:691px;font-size:13.2px;line-height:13.2px;color:#000;transform:scaleX(0.9300);">2</span>
<span style="left:46.38px;top:721px;font-size:13.2px;line-height:13.2px;color:#000;font-weight:bold;transform:scaleX(0.9300);">III</span>
<span style="left:48.09px;top:751px;font-size:13.2px;line-height:13.2px;color:#000;transform:scaleX(0.9300);">1</span>
<span style="left:48.09px;top:771px;font-size:13.2px;line-height:13.2px;color:#000;transform:scaleX(0.9300);">2</span>
<span style="left:46.55px;top:790px;font-size:14.85px;line-height:14.85px;color:#000;font-family:'Liberation Serif',serif;font-weight:bold;">B</span>
<span style="left:47.84px;top:810px;font-size:14.67px;line-height:14.67px;color:#000;font-family:'Liberation Serif',serif;">1</span>
<span style="left:47.84px;top:830px;font-size:14.67px;line-height:14.67px;color:#000;font-family:'Liberation Serif',serif;">2</span>
<span style="left:47.84px;top:850px;font-size:14.67px;line-height:14.67px;color:#000;font-family:'Liberation Serif',serif;">3</span>
<span style="left:484.52px;top:512px;font-size:13.33px;line-height:13.33px;color:#000;font-weight:bold;transform:scaleX(0.8120);">10,339,089</span>
<span style="left:625.66px;top:512px;font-size:13.33px;line-height:13.33px;color:#000;font-weight:bold;transform:scaleX(0.8120);">29</span>
<span style="left:688.55px;top:512px;font-size:13.33px;line-height:13.33px;color:#000;font-weight:bold;transform:scaleX(0.8120);">2,772,834</span>
<span style="left:823.66px;top:512px;font-size:13.33px;line-height:13.33px;color:#000;font-weight:bold;transform:scaleX(0.8120);">89</span>
<span style="left:867.55px;top:512px;font-size:13.33px;line-height:13.33px;color:#000;font-weight:bold;transform:scaleX(0.8120);">7,566,255</span>
<span style="left:947.55px;top:512px;font-size:13.33px;line-height:13.33px;color:#000;font-weight:bold;transform:scaleX(0.8120);">4,846,846</span>
<span style="left:1027.55px;top:512px;font-size:13.33px;line-height:13.33px;color:#000;font-weight:bold;transform:scaleX(0.8120);">5,492,243</span>
<span style="left:484.52px;top:550px;font-size:13.33px;line-height:13.33px;color:#000;font-weight:bold;transform:scaleX(0.8120);">43,289,001</span>
<span style="left:619.63px;top:550px;font-size:13.33px;line-height:13.33px;color:#000;font-weight:bold;transform:scaleX(0.8120);">252</span>
<span style="left:683.12px;top:550px;font-size:13.33px;line-height:13.33px;color:#000;font-weight:bold;transform:scaleX(0.8120);">22,211,088</span>
<span style="left:817.63px;top:550px;font-size:13.33px;line-height:13.33px;color:#000;font-weight:bold;transform:scaleX(0.8120);">303</span>
<span style="left:861.52px;top:550px;font-size:13.33px;line-height:13.33px;color:#000;font-weight:bold;transform:scaleX(0.8120);">21,077,913</span>
<span style="left:941.52px;top:550px;font-size:13.33px;line-height:13.33px;color:#000;font-weight:bold;transform:scaleX(0.8120);">29,810,761</span>
<span style="left:1021.52px;top:550px;font-size:13.33px;line-height:13.33px;color:#000;font-weight:bold;transform:scaleX(0.8120);">13,478,240</span>
<span style="left:490.55px;top:590px;font-size:13.33px;line-height:13.33px;color:#000;font-weight:bold;transform:scaleX(0.8120);">7,007,789</span>
<span style="left:625.66px;top:590px;font-size:13.33px;line-height:13.33px;color:#000;font-weight:bold;transform:scaleX(0.8120);">68</span>
<span style="left:688.55px;top:590px;font-size:13.33px;line-height:13.33px;color:#000;font-weight:bold;transform:scaleX(0.8120);">2,657,812</span>
<span style="left:823.66px;top:590px;font-size:13.33px;line-height:13.33px;color:#000;font-weight:bold;transform:scaleX(0.8120);">59</span>
<span style="left:867.55px;top:590px;font-size:13.33px;line-height:13.33px;color:#000;font-weight:bold;transform:scaleX(0.8120);">4,349,977</span>
<span style="left:956.57px;top:590px;font-size:13.33px;line-height:13.33px;color:#000;font-weight:bold;transform:scaleX(0.8120);">526,277</span>
<span style="left:1027.55px;top:590px;font-size:13.33px;line-height:13.33px;color:#000;font-weight:bold;transform:scaleX(0.8120);">6,481,512</span>
<span style="left:490.55px;top:630px;font-size:13.33px;line-height:13.33px;color:#000;transform:scaleX(0.8120);">7,007,789</span>
<span style="left:625.66px;top:630px;font-size:13.33px;line-height:13.33px;color:#000;transform:scaleX(0.8120);">68</span>
<span style="left:688.55px;top:630px;font-size:13.33px;line-height:13.33px;color:#000;transform:scaleX(0.8120);">2,657,812</span>
<span style="left:823.66px;top:630px;font-size:13.33px;line-height:13.33px;color:#000;transform:scaleX(0.8120);">59</span>
<span style="left:867.55px;top:630px;font-size:13.33px;line-height:13.33px;color:#000;transform:scaleX(0.8120);">4,349,977</span>
<span style="left:956.57px;top:630px;font-size:13.33px;line-height:13.33px;color:#000;transform:scaleX(0.8120);">526,277</span>
<span style="left:1027.55px;top:630px;font-size:13.33px;line-height:13.33px;color:#000;transform:scaleX(0.8120);">6,481,512</span>
<span style="left:484.52px;top:650px;font-size:13.33px;line-height:13.33px;color:#000;font-weight:bold;transform:scaleX(0.8120);">19,128,634</span>
<span style="left:620.23px;top:650px;font-size:13.33px;line-height:13.33px;color:#000;font-weight:bold;transform:scaleX(0.8120);">113</span>
<span style="left:682.52px;top:650px;font-size:13.33px;line-height:13.33px;color:#000;font-weight:bold;transform:scaleX(0.8120);">10,101,552</span>
<span style="left:823.66px;top:650px;font-size:13.33px;line-height:13.33px;color:#000;font-weight:bold;transform:scaleX(0.8120);">80</span>
<span style="left:867.55px;top:650px;font-size:13.33px;line-height:13.33px;color:#000;font-weight:bold;transform:scaleX(0.8120);">9,027,082</span>
<span style="left:942.12px;top:650px;font-size:13.33px;line-height:13.33px;color:#000;font-weight:bold;transform:scaleX(0.8120);">11,212,564</span>
<span style="left:1027.55px;top:650px;font-size:13.33px;line-height:13.33px;color:#000;font-weight:bold;transform:scaleX(0.8120);">7,916,070</span>
<span style="left:490.55px;top:670px;font-size:13.33px;line-height:13.33px;color:#000;transform:scaleX(0.8120);">6,531,025</span>
<span style="left:625.66px;top:670px;font-size:13.33px;line-height:13.33px;color:#000;transform:scaleX(0.8120);">96</span>
<span style="left:688.55px;top:670px;font-size:13.33px;line-height:13.33px;color:#000;transform:scaleX(0.8120);">2,893,934</span>
<span style="left:823.66px;top:670px;font-size:13.33px;line-height:13.33px;color:#000;transform:scaleX(0.8120);">15</span>
<span style="left:867.55px;top:670px;font-size:13.33px;line-height:13.33px;color:#000;transform:scaleX(0.8120);">3,637,091</span>
<span style="left:947.55px;top:670px;font-size:13.33px;line-height:13.33px;color:#000;transform:scaleX(0.8120);">6,665,654</span>
<span style="left:1032.97px;top:670px;font-size:13.33px;line-height:13.33px;color:#000;transform:scaleX(0.8120);">-134,629</span>
<span style="left:484.52px;top:690px;font-size:13.33px;line-height:13.33px;color:#000;transform:scaleX(0.8120);">12,597,609</span>
<span style="left:625.66px;top:690px;font-size:13.33px;line-height:13.33px;color:#000;transform:scaleX(0.8120);">17</span>
<span style="left:688.55px;top:690px;font-size:13.33px;line-height:13.33px;color:#000;transform:scaleX(0.8120);">7,207,618</span>
<span style="left:823.66px;top:690px;font-size:13.33px;line-height:13.33px;color:#000;transform:scaleX(0.8120);">65</span>
<span style="left:867.55px;top:690px;font-size:13.33px;line-height:13.33px;color:#000;transform:scaleX(0.8120);">5,389,991</span>
<span style="left:947.55px;top:690px;font-size:13.33px;line-height:13.33px;color:#000;transform:scaleX(0.8120);">4,546,910</span>
<span style="left:1027.55px;top:690px;font-size:13.33px;line-height:13.33px;color:#000;transform:scaleX(0.8120);">8,050,699</span>
<span style="left:484.52px;top:720px;font-size:13.33px;line-height:13.33px;color:#000;font-weight:bold;transform:scaleX(0.8120);">17,152,578</span>
<span style="left:625.66px;top:720px;font-size:13.33px;line-height:13.33px;color:#000;font-weight:bold;transform:scaleX(0.8120);">71</span>
<span style="left:688.55px;top:720px;font-size:13.33px;line-height:13.33px;color:#000;font-weight:bold;transform:scaleX(0.8120);">9,451,724</span>
<span style="left:817.63px;top:720px;font-size:13.33px;line-height:13.33px;color:#000;font-weight:bold;transform:scaleX(0.8120);">164</span>
<span style="left:867.55px;top:720px;font-size:13.33px;line-height:13.33px;color:#000;font-weight:bold;transform:scaleX(0.8120);">7,700,854</span>
<span style="left:941.52px;top:720px;font-size:13.33px;line-height:13.33px;color:#000;font-weight:bold;transform:scaleX(0.8120);">18,071,920</span>
<span style="left:1032.97px;top:720px;font-size:13.33px;line-height:13.33px;color:#000;font-weight:bold;transform:scaleX(0.8120);">-919,342</span>
<span style="left:490.55px;top:750px;font-size:13.33px;line-height:13.33px;color:#000;transform:scaleX(0.8120);">9,691,995</span>
<span style="left:625.66px;top:750px;font-size:13.33px;line-height:13.33px;color:#000;transform:scaleX(0.8120);">21</span>
<span style="left:688.55px;top:750px;font-size:13.33px;line-height:13.33px;color:#000;transform:scaleX(0.8120);">3,946,378</span>
<span style="left:823.66px;top:750px;font-size:13.33px;line-height:13.33px;color:#000;transform:scaleX(0.8120);">72</span>
<span style="left:867.55px;top:750px;font-size:13.33px;line-height:13.33px;color:#000;transform:scaleX(0.8120);">5,745,617</span>
<span style="left:947.55px;top:750px;font-size:13.33px;line-height:13.33px;color:#000;transform:scaleX(0.8120);">8,393,720</span>
<span style="left:1027.55px;top:750px;font-size:13.33px;line-height:13.33px;color:#000;transform:scaleX(0.8120);">1,298,275</span>
<span style="left:490.55px;top:770px;font-size:13.33px;line-height:13.33px;color:#000;transform:scaleX(0.8120);">7,460,583</span>
<span style="left:625.66px;top:770px;font-size:13.33px;line-height:13.33px;color:#000;transform:scaleX(0.8120);">50</span>
<span style="left:688.55px;top:770px;font-size:13.33px;line-height:13.33px;color:#000;transform:scaleX(0.8120);">5,505,346</span>
<span style="left:823.66px;top:770px;font-size:13.33px;line-height:13.33px;color:#000;transform:scaleX(0.8120);">92</span>
<span style="left:867.55px;top:770px;font-size:13.33px;line-height:13.33px;color:#000;transform:scaleX(0.8120);">1,955,237</span>
<span style="left:947.55px;top:770px;font-size:13.33px;line-height:13.33px;color:#000;transform:scaleX(0.8120);">9,678,200</span>
<span style="left:1023.95px;top:770px;font-size:13.33px;line-height:13.33px;color:#000;transform:scaleX(0.8120);">-2,217,617</span>
<span style="left:490.55px;top:790px;font-size:13.33px;line-height:13.33px;color:#000;font-weight:bold;transform:scaleX(0.8120);">4,215,128</span>
<span style="left:625.66px;top:790px;font-size:13.33px;line-height:13.33px;color:#000;font-weight:bold;transform:scaleX(0.8120);">53</span>
<span style="left:688.55px;top:790px;font-size:13.33px;line-height:13.33px;color:#000;font-weight:bold;transform:scaleX(0.8120);">2,344,571</span>
<span style="left:823.66px;top:790px;font-size:13.33px;line-height:13.33px;color:#000;font-weight:bold;transform:scaleX(0.8120);">40</span>
<span style="left:867.55px;top:790px;font-size:13.33px;line-height:13.33px;color:#000;font-weight:bold;transform:scaleX(0.8120);">1,870,557</span>
<span style="left:947.55px;top:790px;font-size:13.33px;line-height:13.33px;color:#000;font-weight:bold;transform:scaleX(0.8120);">1,276,627</span>
<span style="left:1027.55px;top:790px;font-size:13.33px;line-height:13.33px;color:#000;font-weight:bold;transform:scaleX(0.8120);">2,938,501</span>
<span style="left:490.55px;top:810px;font-size:13.33px;line-height:13.33px;color:#000;transform:scaleX(0.8120);">4,215,128</span>
<span style="left:625.66px;top:810px;font-size:13.33px;line-height:13.33px;color:#000;transform:scaleX(0.8120);">53</span>
<span style="left:688.55px;top:810px;font-size:13.33px;line-height:13.33px;color:#000;transform:scaleX(0.8120);">2,344,571</span>
<span style="left:823.66px;top:810px;font-size:13.33px;line-height:13.33px;color:#000;transform:scaleX(0.8120);">40</span>
<span style="left:867.55px;top:810px;font-size:13.33px;line-height:13.33px;color:#000;transform:scaleX(0.8120);">1,870,557</span>
<span style="left:947.55px;top:810px;font-size:13.33px;line-height:13.33px;color:#000;transform:scaleX(0.8120);">1,276,627</span>
<span style="left:1027.55px;top:810px;font-size:13.33px;line-height:13.33px;color:#000;transform:scaleX(0.8120);">2,938,501</span>
<span style="left:490.55px;top:830px;font-size:13.33px;line-height:13.33px;color:#000;transform:scaleX(0.8120);">4,215,128</span>
<span style="left:625.66px;top:830px;font-size:13.33px;line-height:13.33px;color:#000;transform:scaleX(0.8120);">53</span>
<span style="left:688.55px;top:830px;font-size:13.33px;line-height:13.33px;color:#000;transform:scaleX(0.8120);">2,344,571</span>
<span style="left:823.66px;top:830px;font-size:13.33px;line-height:13.33px;color:#000;transform:scaleX(0.8120);">40</span>
<span style="left:867.55px;top:830px;font-size:13.33px;line-height:13.33px;color:#000;transform:scaleX(0.8120);">1,870,557</span>
<span style="left:947.55px;top:830px;font-size:13.33px;line-height:13.33px;color:#000;transform:scaleX(0.8120);">1,276,627</span>
<span style="left:1027.55px;top:830px;font-size:13.33px;line-height:13.33px;color:#000;transform:scaleX(0.8120);">2,938,501</span>
<span style="left:490.55px;top:850px;font-size:13.33px;line-height:13.33px;color:#000;transform:scaleX(0.8120);">4,215,128</span>
<span style="left:625.66px;top:850px;font-size:13.33px;line-height:13.33px;color:#000;transform:scaleX(0.8120);">53</span>
<span style="left:688.55px;top:850px;font-size:13.33px;line-height:13.33px;color:#000;transform:scaleX(0.8120);">2,344,571</span>
<span style="left:823.66px;top:850px;font-size:13.33px;line-height:13.33px;color:#000;transform:scaleX(0.8120);">40</span>
<span style="left:867.55px;top:850px;font-size:13.33px;line-height:13.33px;color:#000;transform:scaleX(0.8120);">1,870,557</span>
<span style="left:947.55px;top:850px;font-size:13.33px;line-height:13.33px;color:#000;transform:scaleX(0.8120);">1,276,627</span>
<span style="left:1027.55px;top:850px;font-size:13.33px;line-height:13.33px;color:#000;transform:scaleX(0.8120);">2,938,501</span>
<svg style="left:0;top:0;pointer-events:none" width="1411" height="945" viewBox="0 0 1411 945"><rect x="18" y="76" width="24" height="25" rx="1.6" fill="#eac282"/>
<path d="M23 80.2v-2.6a1 1 0 0 1 1-1h3.2v-2a1.4 1.4 0 0 1 1.4-1.4h2.8a1.4 1.4 0 0 1 1.4 1.4v2h3.2a1 1 0 0 1 1 1v2.6z" fill="#787878"/>
<circle cx="30" cy="75.6" r="0.9" fill="#f3f3f3"/>
<path d="M32.5 84.5h8l5 5v13h-13z" fill="#fff" stroke="#7a7a7a" stroke-width="1"/><path d="M40.5 84.5v5h5" fill="none" stroke="#7a7a7a" stroke-width="1"/>
<path d="M26.8 128l2.8 3l2.8 -3" fill="none" stroke="#333" stroke-width="1.3"/>
<path d="M58.2 71.6L65 81 M66.2 71.6L59.4 81" stroke="#6a6a6a" stroke-width="1.8" fill="none"/>
<circle cx="58" cy="83.1" r="2.5" fill="none" stroke="#3e7ebf" stroke-width="1.1"/><circle cx="66" cy="83.1" r="2.5" fill="none" stroke="#3e7ebf" stroke-width="1.1"/>
<path d="M54.5 95.5h4.5l2 2v8.5h-6.5z" fill="#fff" stroke="#6a6a6a" stroke-width="1"/>
<path d="M56 98.6h3M56 100.5h3M56 102.4h3" stroke="#3e7ebf" stroke-width="1"/>
<path d="M60.5 98.9h5.5l2.5 2.5v7h-8z" fill="#fff" stroke="#6a6a6a" stroke-width="1"/>
<path d="M62.2 101.6h3M62.2 103.5h4.8M62.2 105.4h4.8" stroke="#3e7ebf" stroke-width="1"/>
<path d="M116.6 101l2.9 3.1l2.9 -3.1" fill="none" stroke="#333" stroke-width="1.3"/>
<path d="M54.2 124.6L59.8 122.2L65.2 127.6L61 131.6z" fill="#eac282"/>
<path d="M60.2 121.6L63.4 118.4L68.6 123.6L65.4 126.8z" fill="#6e6e6e"/><path d="M65.6 119.8L67.9 117.5L70 119.6L67.7 121.9z" fill="#6e6e6e"/>
<path d="M154.5 151.6V145.5H160.6" fill="none" stroke="#2a2a2a" stroke-width="1"/><path d="M157.2 148.3L161.3 152.1M161.5 148.3V152.5H157.3" fill="none" stroke="#2a2a2a" stroke-width="1.1"/>
<path d="M286.6 86h5.4l-2.7 3z" fill="#666"/>
<path d="M332 86h5.4l-2.7 3z" fill="#666"/>
<path d="M358 82.8l2.5-2.8l2.5 2.8z" fill="#3e7ebf"/>
<path d="M382 80l2.5 2.8l2.5-2.8z" fill="#3e7ebf"/>
<path d="M207 113.5h5.2M205.1 121.5h5M209.7 113.5L207.5 121.5" stroke="#444" stroke-width="1.3" fill="none"/>
<path d="M247.5 117l2.9 3.1l2.9 -3.1" fill="none" stroke="#333" stroke-width="1.3"/>
<path d="M272 111h1v1h-1zM272 117h1v1h-1zM274 111h1v1h-1zM274 117h1v1h-1zM276 111h1v1h-1zM276 117h1v1h-1zM278 111h1v1h-1zM278 117h1v1h-1zM280 111h1v1h-1zM280 117h1v1h-1zM282 111h1v1h-1zM282 117h1v1h-1zM284 111h1v1h-1zM284 117h1v1h-1zM272 113h1v1h-1zM278 113h1v1h-1zM284 113h1v1h-1zM272 115h1v1h-1zM278 115h1v1h-1zM284 115h1v1h-1zM272 119h1v1h-1zM278 119h1v1h-1zM284 119h1v1h-1zM272 121h1v1h-1zM278 121h1v1h-1zM284 121h1v1h-1z" fill="#666" shape-rendering="crispEdges"/>
<path d="M293.5 117l2.9 3.1l2.9 -3.1" fill="none" stroke="#333" stroke-width="1.3"/>
<path d="M324.5 111.2L330.7 117.4L324.7 121.6L319.3 117.4z" fill="#fff" stroke="#5a5a5a" stroke-width="1"/>
<path d="M322.6 112.8v-2.6h2.8v6" fill="none" stroke="#5a5a5a" stroke-width="1"/>
<path d="M330 114c2.6 1.6 3.4 4.4 1.6 7.2c0.3-2.4-0.4-4.6-2.2-6.4z" fill="#3e7ebf"/>
<path d="M339.5 117l2.9 3.1l2.9 -3.1" fill="none" stroke="#333" stroke-width="1.3"/>
<path d="M378.7 117l2.9 3.1l2.9 -3.1" fill="none" stroke="#333" stroke-width="1.3"/>
<path d="M386.5 151.6V145.5H392.6" fill="none" stroke="#2a2a2a" stroke-width="1"/><path d="M389.2 148.3L393.3 152.1M393.5 148.3V152.5H389.3" fill="none" stroke="#2a2a2a" stroke-width="1.1"/>
<g transform="translate(493.6 86.2) rotate(-45)"><text x="-6" y="3" font-family="Liberation Sans" font-size="10.5" fill="#4a4a4a">ab</text></g>
<path d="M494 93.5L503.4 84.6M499.6 84.6h3.9v3.9" fill="none" stroke="#5a5a5a" stroke-width="1"/>
<path d="M508.7 86l2.9 3.1l2.9 -3.1" fill="none" stroke="#333" stroke-width="1.3"/>
<path d="M489 117.5h5.6M491.6 114.7l-2.8 2.8l2.8 2.8" fill="none" stroke="#3e7ebf" stroke-width="1.6"/>
<path d="M512.2 117.5h5.6M515.2 114.7l2.8 2.8l-2.8 2.8" fill="none" stroke="#3e7ebf" stroke-width="1.6"/>
<path d="M556 89v2.6h-3.6M554 90l-1.8 1.6l1.8 1.6" fill="none" stroke="#3e7ebf" stroke-width="1"/>
<rect x="543.5" y="110.5" width="14" height="14" fill="#fff" stroke="#6a6a6a" stroke-width="1"/>
<path d="M543.5 113.5h14M543.5 121.5h14M550.5 110.5v3M550.5 121.5v3" stroke="#6a6a6a" stroke-width="1" fill="none"/>
<path d="M546 117.5h9M547.4 115.8l-1.8 1.7l1.8 1.7M553.6 115.8l1.8 1.7l-1.8 1.7" fill="none" stroke="#3e7ebf" stroke-width="1"/>
<path d="M662.4 117l2.9 3.1l2.9 -3.1" fill="none" stroke="#333" stroke-width="1.3"/>
<path d="M674.5 151.6V145.5H680.6" fill="none" stroke="#2a2a2a" stroke-width="1"/><path d="M677.2 148.3L681.3 152.1M681.5 148.3V152.5H677.3" fill="none" stroke="#2a2a2a" stroke-width="1.1"/>
<path d="M824 86h5.4l-2.7 3z" fill="#666"/>
<path d="M719.7 117l2.9 3.1l2.9 -3.1" fill="none" stroke="#333" stroke-width="1.3"/>
<path d="M764.9 121c2.3-1 3.2-2.4 3.1-3.4a2.2 2.2 0 1 1 1.9-1.8c-0.1 2.4-1.9 4.7-4.7 5.9z" fill="#4a4a4a"/>
<path d="M791.4 114.7h6.6M794 112.3l-2.6 2.4l2.6 2.4" fill="none" stroke="#3e7ebf" stroke-width="1.2"/>
<path d="M815 121.3h6.6M819 118.9l2.6 2.4l-2.6 2.4" fill="none" stroke="#3e7ebf" stroke-width="1.2"/>
<path d="M830.5 151.6V145.5H836.6" fill="none" stroke="#2a2a2a" stroke-width="1"/><path d="M833.2 148.3L837.3 152.1M837.5 148.3V152.5H833.3" fill="none" stroke="#2a2a2a" stroke-width="1.1"/>
<rect x="873.5" y="73.5" width="27" height="24" fill="#fff" stroke="#7a7a7a" stroke-width="1"/>
<path d="M880.5 74v23M887 74v23M893.5 74v23M874 79.5h26M874 85.5h26M874 91.5h26" stroke="#b4b4b4" stroke-width="1" fill="none"/>
<rect x="881" y="74" width="6" height="5" fill="#d9603f"/><rect x="881" y="80" width="11" height="5" fill="#4179bd"/><rect x="881" y="86" width="9" height="5" fill="#d9603f"/><rect x="881" y="92" width="4" height="5" fill="#4179bd"/>
<rect x="886.5" y="89.5" width="17" height="14" fill="#f3f3f3"/><rect x="887.5" y="90.5" width="15" height="12" fill="#fff" stroke="#7a7a7a" stroke-width="1"/>
<path d="M891 94.8h8M891 98.2h8M897.5 92.4l-5 8.2" stroke="#444" stroke-width="1" fill="none"/>
<path d="M915 128l2.8 3l2.8 -3" fill="none" stroke="#333" stroke-width="1.3"/>
<rect x="940.5" y="75.5" width="24" height="20" fill="#fff" stroke="#7a7a7a" stroke-width="1"/>
<rect x="946.5" y="80.5" width="18" height="15" fill="#c5d9f1"/>
<path d="M946.5 76v19.5M952.5 76v19.5M958.5 76v19.5M941 80.5h23.5M941 85.5h23.5M941 90.5h23.5" stroke="#a6a6a6" stroke-width="1" fill="none"/>
<rect x="940.5" y="75.5" width="24" height="20" fill="none" stroke="#7a7a7a" stroke-width="1"/>
<path d="M969 80.6v6.4l-7.6 8.4l-3.4-3.4z" fill="#7a7a7a" stroke="#f3f3f3" stroke-width="0.8"/>
<path d="M946.5 102.7c4-1.6 6.6-4.4 8-7.4c1.4-2 5-1.6 5.6 1c0.6 3.4-3 6.4-7 6.4z" fill="#3e7ebf"/>
<path d="M955.6 95.6c1.4-1 3.4-0.6 3.6 1.6c-1-0.6-2.4-1-3.6-1.6z" fill="#fff"/>
<path d="M958.6 92.6l2.2 2.2" stroke="#f3f3f3" stroke-width="1"/>
<path d="M965 128l2.8 3l2.8 -3" fill="none" stroke="#333" stroke-width="1.3"/>
<path d="M94.2 178.8h6.6l-3.3 3.4z" fill="#777"/>
<path d="M152.3 177.5l9.4 8M161.7 177.5l-9.4 8" stroke="#a8a8a8" stroke-width="1.6" fill="none"/>
<path d="M187.5 182l3.7 3.6l8-8.4" stroke="#b0b0b0" stroke-width="2.3" fill="none"/>
<path d="M22.5 208.5v11h-11z" fill="#b7b7b7"/>
<path d="M27 470h6l-6 6z" fill="#0e8212"/>
<path d="M27 627h6l-6 6z" fill="#0e8212"/>
<path d="M27 667h6l-6 6z" fill="#0e8212"/>
<path d="M27 687h6l-6 6z" fill="#0e8212"/>
<path d="M27 747h6l-6 6z" fill="#0e8212"/>
<path d="M27 767h6l-6 6z" fill="#0e8212"/>
<path d="M27 807h6l-6 6z" fill="#0e8212"/>
<path d="M27 827h6l-6 6z" fill="#0e8212"/>
<path d="M27 847h6l-6 6z" fill="#0e8212"/>
<path d="M443 687h6l-6 6z" fill="#0e8212"/>
<path d="M999 687h6l-6 6z" fill="#0e8212"/>
<path d="M443 767h6l-6 6z" fill="#0e8212"/>
<path d="M999 767h6l-6 6z" fill="#0e8212"/></svg>
<div style="left:1px;top:65px;width:1px;height:92px;background:#fbfbfb;"></div>
<div style="left:1px;top:158px;width:1px;height:46px;background:#efefef;"></div>
<div style="left:1px;top:224px;width:1px;height:721px;background:#efefef;"></div>
<div style="left:0px;top:0px;width:1411px;height:1px;background:#5a5556;"></div>
<div style="left:1410px;top:0px;width:1px;height:945px;background:#4d4a48;"></div>
<div style="left:0px;top:944px;width:1411px;height:1px;background:#4d4a48;"></div>
<div style="left:0px;top:0px;width:1px;height:945px;background:#4d4a48;"></div>
</body></html>
